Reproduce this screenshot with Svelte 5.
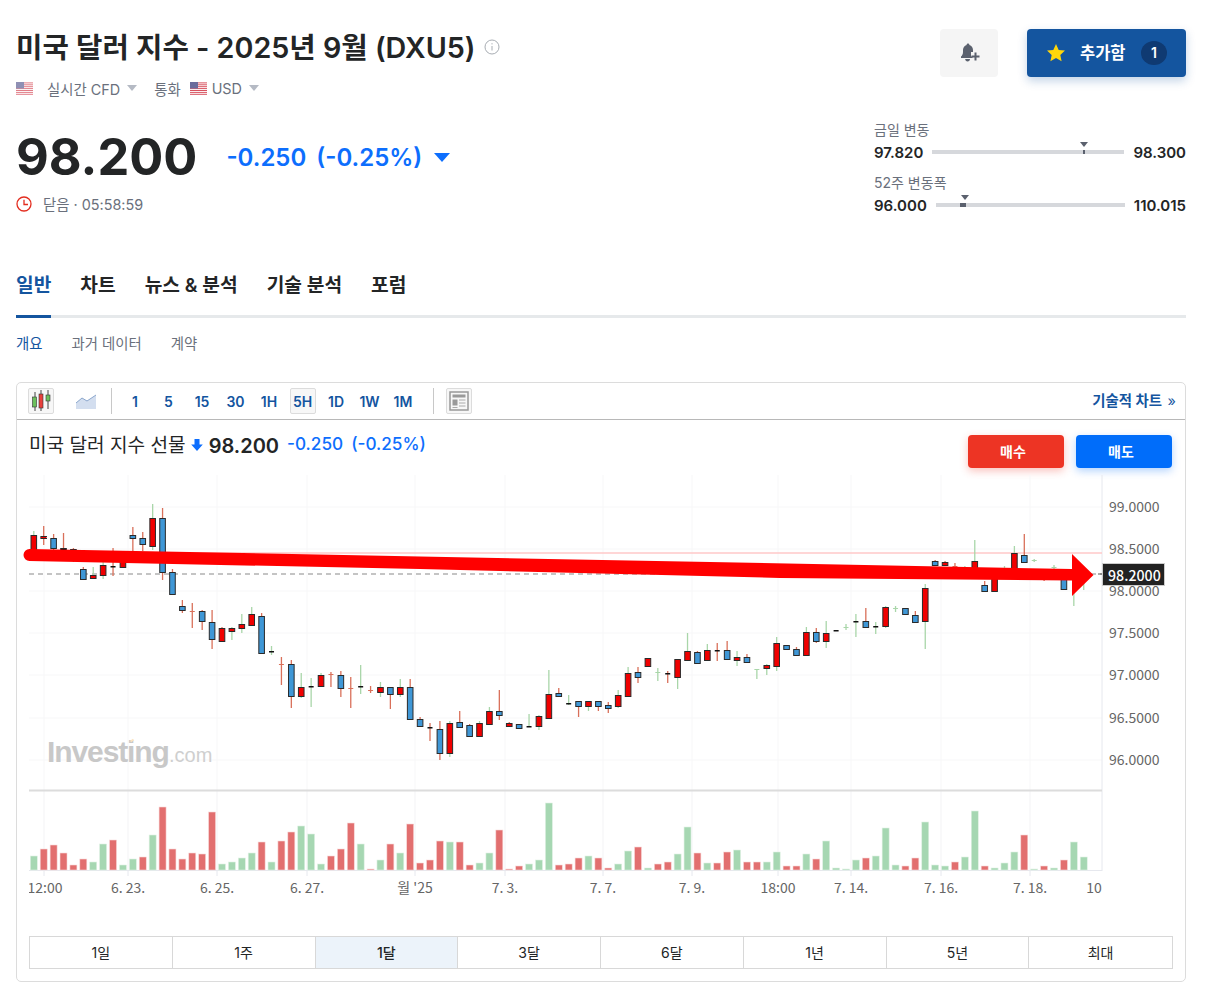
<script>
  // [wickTop, wickBottom, bodyTop, bodyBottom, body, wick]  r/b body, r/g wick
  const candles = [
    [531,552,535,560,"r","g"],[526,545,536,538,"r","r"],[534,550,538,548,"b","r"],[533,553,548,550,"k","r"],[548,562,549,551,"k","r"],
    [567,580,569,579,"b","r"],[567,579,575,578,"r","g"],[562,579,565,575,"r","g"],[548,576,566,567,"k","r"],[555,567,558,567,"r","r"],
    [527,552,535,538,"b","r"],[532,551,538,544,"b","r"],[504,550,518,546,"r","g"],[508,580,518,572,"b","r"],[569,595,572,594,"b","r"],
    [600,613,606,610,"b","r"],[603,628,611,612,"c","r"],[610,630,611,621,"b","r"],[610,649,622,639,"b","r"],[627,641,628,641,"r","r"],
    [627,640,628,631,"r","g"],[614,633,624,628,"r","g"],[607,625,614,625,"r","g"],[613,653,616,653,"b","r"],[646,655,651,652,"k","g"],
    [657,685,664,665,"c","r"],[660,708,664,696,"b","r"],[673,698,687,696,"r","g"],[678,707,686,687,"k","g"],[673,687,675,686,"r","g"],
    [672,687,674,675,"c","r"],[671,697,675,688,"b","r"],[677,708,688,689,"c","r"],[665,694,686,687,"k","g"],[686,693,690,691,"c","r"],
    [682,697,687,692,"r","g"],[687,709,687,694,"b","r"],[679,697,687,694,"r","g"],[679,720,687,719,"b","r"],[717,727,719,726,"b","r"],
    [723,741,727,728,"k","r"],[721,760,729,753,"b","r"],[721,757,723,753,"r","g"],[711,727,722,727,"b","r"],[724,736,725,736,"b","r"],
    [721,736,723,736,"r","g"],[707,724,711,724,"r","g"],[690,720,711,715,"b","r"],[722,727,723,726,"r","r"],[724,729,724,728,"b","r"],
    [714,727,726,727,"k","g"],[715,730,716,726,"r","g"],[670,718,694,718,"r","g"],[688,696,693,696,"b","r"],[695,705,703,704,"k","g"],
    [701,717,701,706,"b","r"],[701,711,701,706,"r","g"],[701,711,701,706,"b","r"],[702,713,705,708,"b","r"],[690,708,695,706,"r","g"],
    [667,696,673,696,"r","g"],[667,683,672,677,"b","r"],[658,666,658,666,"r","r"],[668,681,672,673,"e","g"],[671,683,673,674,"k","r"],
    [659,689,659,677,"r","g"],[633,660,651,660,"r","g"],[651,664,652,663,"b","r"],[644,660,650,660,"r","g"],[643,661,650,651,"k","r"],
    [641,659,650,659,"b","r"],[651,666,657,660,"r","g"],[654,663,657,662,"b","r"],[669,679,669,670,"e","g"],[664,675,665,668,"r","g"],
    [637,671,643,666,"r","g"],[645,649,645,649,"b","r"],[647,655,649,655,"b","r"],[627,655,632,655,"r","g"],[628,643,632,641,"b","r"],
    [621,648,633,641,"r","g"],[630,631,630,631,"k","g"],[624,630,627,628,"e","g"],[614,637,621,622,"k","g"],[608,628,621,627,"b","r"],
    [622,634,626,627,"k","g"],[606,628,607,626,"r","g"],[606,612,608,609,"e","g"],[608,614,608,614,"b","r"],[611,622,615,622,"b","r"],
    [584,649,588,621,"r","g"],[560,566,561,565,"b","r"],[561,566,562,565,"r","r"],[563,570,566,568,"c","r"],[566,570,567,568,"e","g"],
    [540,570,561,572,"r","g"],[581,591,585,591,"b","r"],[570,591,570,591,"r","r"],[566,576,570,571,"e","g"],[546,575,553,572,"r","g"],
    [534,563,555,562,"b","r"],[559,562,560,561,"e","g"],[575,581,576,577,"c","r"],[565,570,567,568,"e","g"],[575,590,576,589,"b","r"],
    [570,606,574,576,"e","g"],[570,590,572,578,"e","g"]
  ];
  const volumes = [
    "g14","r21","r25","r17","r5","r11","g8","g26","r30","g5","g11","r13","g35","r63","r21","r11","r17","r16","r58","g6",
    "g8","g12","g17","r28","g8","r29","r38","g44","g36","g6","r14","r21","r47","g26","r1","g10","r26","g17","r46","r7",
    "r10","r29","g28","r28","r5","g7","g17","r40","r1","r4","g6","g10","g67","r5","r6","r12","g14","r12","r2","g6",
    "g19","r23","g2","r6","r8","g16","g43","r17","g7","r7","r18","g20","r8","r8","g8","g18","r4","r4","g16","r11",
    "g29","g2","g1","g10","r12","g14","g42","g5","r4","r12","g48","g5","g4","r8","g13","g59","r4","g2","g7","g18",
    "r35","g1","r4","g2","r10","g28","g13"
  ];
  const step = 9.905;
  const xAt = (i) => 33.8 + i * step;

  const gridX = [44, 128, 217, 307, 415, 505, 603, 692, 778, 851, 941, 1030];
  const yLabels = [
    [507, "99.0000"], [549, "98.5000"], [591, "98.0000"], [633, "97.5000"],
    [675, "97.0000"], [718, "96.5000"], [760, "96.0000"]
  ];
  const xLabels = [
    [45, "12:00"], [128, "6. 23."], [217, "6. 25."], [307, "6. 27."], [415, "월 '25"], [505, "7. 3."],
    [603, "7. 7."], [692, "7. 9."], [778, "18:00"], [851, "7. 14."], [941, "7. 16."], [1030, "7. 18."], [1094, "10"]
  ];
  const intervals = ["1", "5", "15", "30", "1H", "5H", "1D", "1W", "1M"];
  const ranges = ["1일", "1주", "1달", "3달", "6달", "1년", "5년", "최대"];
  const bodyFill = { r: "#f00000", b: "#3f97d6", k: "#111", c: "#d9705a", e: "#a9d6a9" };
</script>

{#snippet flag()}
  <svg class="flag" viewBox="0 0 17 13" width="17" height="13">
    <rect width="17" height="13" fill="#fff" />
    <path d="M0 .9h17M0 2.8h17M0 4.700h17M0 6.600h17M0 8.500h17M0 10.400h17M0 12.300h17" stroke="#d8525f" stroke-width="1" />
    <rect width="8" height="6.500" fill="#6a6c9c" />
  </svg>
{/snippet}

<div class="page">
  <div class="top">
    <div class="title-wrap">
      <h1>미국 달러 지수 - 2025년 9월 (DXU5)</h1>
      <svg class="info" viewBox="0 0 16 16" width="16" height="16" fill="none" stroke="#a8adb3">
        <circle cx="8" cy="8" r="7" />
        <path d="M8 7v4.500M8 4.200v1.200" />
      </svg>
    </div>
    <div class="actions">
      <button class="bell" aria-label="알림">
        <svg viewBox="0 0 20 20" width="20" height="20" fill="#5b616e">
          <path d="M8 .5c.8 0 1.400.6 1.400 1.400 2.400.7 3.600 2.800 3.600 5V9H11v4.500h1.500V15H1v-1.500c1.300-1.200 2-2.600 2-4.600V7c0-2.300 1.300-4.400 3.600-5.100C6.600 1.100 7.200.5 8 .5z" />
          <path d="M5.200 16h4.800c0 1.500-1 2.500-2.400 2.500S5.200 17.500 5.200 16z" />
          <path d="M15.500 9.500v8M11.500 13.500h8" stroke="#5b616e" stroke-width="2" fill="none" />
        </svg>
      </button>
      <button class="watch">
        <svg viewBox="0 0 20 20" width="20" height="20"><path d="M10 1l2.700 5.900 6.300.7-4.700 4.300 1.300 6.300L10 15l-5.600 3.200 1.300-6.300L1 7.600l6.300-.7z" fill="#ffd60a" /></svg>
        <span>추가함</span>
        <b>1</b>
      </button>
    </div>
  </div>

  <div class="meta">
    <span class="flag-first">{@render flag()}</span>
    <span>실시간 CFD</span><i class="caret"></i>
    <span class="cur">통화</span>
    {@render flag()}
    <span class="usd">USD</span><i class="caret"></i>
  </div>

  <div class="quote">
    <div>
      <div class="price-row">
        <span class="price">98.200</span>
        <span class="change">-0.250</span>
        <span class="change pct">(-0.25%)</span>
        <i class="down"></i>
      </div>
      <div class="closed">
        <svg viewBox="0 0 16 16" width="16" height="16" fill="none" stroke="#e32d1f" stroke-width="1.300">
          <circle cx="8" cy="8" r="7" />
          <path d="M8 3.800V8.500H12" />
        </svg>
        <span>닫음 · 05:58:59</span>
      </div>
    </div>
    <div class="ranges">
      <div class="range-label">금일 변동</div>
      <div class="range-row">
        <b>97.820</b>
        <div class="track"><i class="mark" style="left:78.500%"></i><i class="dot" style="left:78.500%;width:2px"></i></div>
        <b>98.300</b>
      </div>
      <div class="range-label second">52주 변동폭</div>
      <div class="range-row">
        <b>96.000</b>
        <div class="track"><i class="mark" style="left:15%"></i><i class="dot" style="left:13%;width:6px"></i></div>
        <b>110.015</b>
      </div>
    </div>
  </div>

  <nav class="tabs">
    <a class="active" href="#top">일반</a>
    <a href="#top">차트</a>
    <a href="#top">뉴스 &amp; 분석</a>
    <a href="#top">기술 분석</a>
    <a href="#top">포럼</a>
  </nav>
  <nav class="subtabs">
    <a class="active" href="#top">개요</a>
    <a href="#top">과거 데이터</a>
    <a href="#top">계약</a>
  </nav>

  <section class="card">
    <div class="toolbar">
      <button class="tool on" aria-label="캔들">
        <svg viewBox="0 0 24 24" width="24" height="24">
          <path d="M6 3v19M12 1v21M19 1v19" stroke="#444" stroke-width="1" />
          <rect x="3.500" y="8" width="4" height="10" fill="#6cc05c" stroke="#333" stroke-width=".6" />
          <rect x="10" y="5" width="4" height="14" fill="#e8403c" stroke="#333" stroke-width=".6" />
          <rect x="17" y="6" width="4" height="6" fill="#6cc05c" stroke="#333" stroke-width=".6" />
        </svg>
      </button>
      <button class="tool plain" aria-label="영역">
        <svg viewBox="0 0 22 16" width="22" height="16">
          <path d="M1 10l6-5 5 3 9-6v14H1z" fill="#d3deef" />
          <path d="M1 10l6-5 5 3 9-6" fill="none" stroke="#8aa6cc" />
        </svg>
      </button>
      <span class="sep"></span>
      <div class="intervals">
        {#each intervals as t}
          <button class="iv" class:sel={t === "5H"}>{t}</button>
        {/each}
      </div>
      <span class="sep second"></span>
      <button class="tool on" aria-label="레이아웃">
        <svg viewBox="0 0 22 22" width="22" height="22" fill="#9a9a9a">
          <path d="M2 2h18v18H2z" fill="none" stroke="#999" stroke-width="1.500" />
          <rect x="4.500" y="4.500" width="13" height="3" />
          <rect x="4.500" y="9.500" width="5" height="6" />
          <path d="M11 10h6.500M11 13h6.500M11 16h6.500M4.500 17.500h5" stroke="#aaa" />
        </svg>
      </button>
      <a class="tech" href="#top">기술적 차트 <span>»</span></a>
    </div>

    <div class="chart">
      <div class="chart-head">
        <span class="name">미국 달러 지수 선물</span>
        <svg viewBox="0 0 12 14" width="12" height="14"><path d="M3.500 1h5v5.500H11.800L6 13 .2 6.500h3.300z" fill="#0d6efd" /></svg>
        <span class="p">98.200</span>
        <span class="c">-0.250</span>
        <span class="c">(-0.25%)</span>
        <div class="trade">
          <button class="buy">매수</button>
          <button class="sell">매도</button>
        </div>
      </div>

      <svg class="plot" width="1168" height="505" viewBox="18 475 1168 505">
        <defs>
          <clipPath id="pane"><rect x="29" y="475" width="1073" height="430" /></clipPath>
        </defs>
        {#each gridX as x}
          <line x1={x} x2={x} y1="475" y2="790" stroke="#f7f7f8" />
          <line x1={x} x2={x} y1="791" y2="870" stroke="#f3f3f5" />
          <line x1={x} x2={x} y1="870" y2="876" stroke="#e6e8ee" />
        {/each}
        {#each yLabels as [y, l]}
          <line x1="29" x2="1102" y1={y} y2={y} stroke="#f7f7f8" />
          <text class="axis" x="1109" y={y + 5}>{l}</text>
        {/each}
        <line x1="1102" x2="1102" y1="475" y2="871" stroke="#e6e8ee" />
        <line x1="29" x2="1102" y1="790.500" y2="790.500" stroke="#dcdcdc" stroke-width="2" />
        <line x1="29" x2="1102" y1="870.500" y2="870.500" stroke="#e6e8ee" />

        <text class="logo" x="47" y="762">Investing</text>
        <text class="logo-com" x="169" y="762">.com</text>
        <line x1="130.500" x2="133.500" y1="741.500" y2="739.500" stroke="#fbe3c0" stroke-width="2" />

        <line x1="29" x2="1102" y1="553" y2="553" stroke="#ffc9c9" stroke-width="1.500" />
        <line x1="29" x2="1102" y1="574" y2="574" stroke="#8a8a8a" stroke-width="1.200" stroke-dasharray="5 4" />

        <g class="soft">
          {#each candles as [t, b, bt, bb, k, w], i}
            <line x1={xAt(i)} x2={xAt(i)} y1={t} y2={b} stroke={w === "r" ? "#d9705a" : "#a9d6a9"} stroke-width="1.300" />
            {#if k === "c" || k === "e"}
              <rect x={xAt(i) - 2.500} y={bt} width="5" height="1" fill={bodyFill[k]} />
            {:else if bb - bt < 2}
              <rect x={xAt(i) - 2.500} y={bt} width="5" height="1.500" fill="#111" />
            {:else}
              <rect x={xAt(i) - 2.800} y={bt + 0.500} width="5.600" height={bb - bt} fill={bodyFill[k]} stroke="#2a2a2a" stroke-width="1" />
            {/if}
          {/each}

          {#each volumes as v, i}
            {@const h = +v.slice(1)}
            <rect
              x={xAt(i) - 3.500}
              y={870 - h}
              width="7"
              height={h}
              fill={v[0] === "r" ? "#e26f6f" : "#a6d7b2"}
              stroke={v[0] === "r" ? "#f8d9d9" : "#e0f1e4"}
              stroke-width=".6"
            />
          {/each}
        </g>

        <g clip-path="url(#pane)">
          {#each xLabels as [x, l]}
            <text class="axis" {x} y="893" text-anchor="middle">{l}</text>
          {/each}
        </g>

        <path
          d="M29.500 549 L1072 569 V554 L1093.500 575 L1072 596 V580.500 L780 578 L420 569 L29.500 561 A6 6 0 0 1 29.500 549 Z"
          fill="#f00"
        />

        <line x1="1098" x2="1102" y1="574" y2="574" stroke="#555" />
        <rect x="1102.500" y="563.500" width="62" height="22" fill="#222" stroke="#ccc" stroke-width="1" />
        <text class="last" x="1108" y="580.500">98.2000</text>
      </svg>

      <div class="range-tabs">
        {#each ranges as r}
          <button class:cur={r === "1달"}>{r}</button>
        {/each}
      </div>
    </div>
  </section>
</div>

<style>
  :global(body) {
    margin: 0;
    background: #fff;
  }
  .page {
    box-sizing: border-box;
    width: 1205px;
    height: 1004px;
    padding: 29px 19px 0 16px;
    color: #232526;
    font-family: Inter, "Noto Sans CJK KR", sans-serif;
    overflow: hidden;
  }
  button {
    font-family: inherit;
    cursor: pointer;
  }
  a {
    text-decoration: none;
    color: inherit;
  }
  .top {
    display: flex;
    justify-content: space-between;
    height: 48px;
  }
  .title-wrap {
    display: flex;
    align-items: center;
    gap: 8px;
    height: 37px;
  }
  h1 {
    margin: 0;
    font-size: 28.700px;
    line-height: 37px;
    font-weight: 600;
  }
  .info {
    margin-top: -1px;
  }
  .actions {
    display: flex;
    gap: 29px;
  }
  .bell {
    width: 58px;
    height: 48px;
    background: #f5f5f5;
    border: 0;
    border-radius: 4px;
    display: flex;
    align-items: center;
    justify-content: center;
    padding: 0 0 0 1px;
  }
  .watch {
    width: 159px;
    height: 48px;
    background: #14559f;
    color: #fff;
    border: 0;
    border-radius: 4px;
    box-shadow: 0 4px 10px rgba(20, 85, 159, 0.25);
    display: flex;
    align-items: center;
    padding: 0 19px 0 19px;
    font-size: 16.500px;
    font-weight: 600;
  }
  .watch span {
    margin-left: 14px;
    flex: 1;
    text-align: left;
    margin-top: -2px;
  }
  .watch b {
    width: 26px;
    height: 24px;
    border-radius: 50%;
    background: #0f3a72;
    font-size: 14px;
    line-height: 24px;
    font-weight: 600;
  }
  .meta {
    display: flex;
    align-items: center;
    height: 24px;
    margin-top: -1px;
    font-size: 14.400px;
    color: #6a707c;
  }
  .flag {
    display: block;
    flex: none;
  }
  .flag-first {
    margin-right: 14px;
    opacity: 0.75;
  }
  .caret {
    width: 0;
    height: 0;
    border: 5px solid transparent;
    border-top: 6px solid #b5bac4;
    border-bottom: 0;
    margin-left: 7px;
  }
  .cur {
    margin: 0 9px 0 17px;
  }
  .usd {
    margin-left: 5px;
  }
  .quote {
    display: flex;
    justify-content: space-between;
    margin-top: 22px;
    height: 134px;
  }
  .price-row {
    display: flex;
    align-items: center;
    height: 62px;
    margin-top: 4px;
  }
  .price {
    font-size: 50.500px;
    font-weight: 700;
    line-height: 62px;
    margin-right: 29px;
  }
  .change {
    font-size: 24px;
    font-weight: 600;
    color: #0d6efd;
    margin-right: 10px;
  }
  .pct {
    margin-right: 12px;
  }
  .down {
    width: 0;
    height: 0;
    border: 8px solid transparent;
    border-top: 9px solid #0d6efd;
    border-bottom: 0;
  }
  .closed {
    display: flex;
    align-items: center;
    gap: 11px;
    margin-top: 5px;
    font-size: 14.400px;
    color: #6a707c;
  }
  .ranges {
    width: 312px;
    margin-top: -2px;
  }
  .range-label {
    font-size: 14px;
    line-height: 20px;
    color: #6a707c;
  }
  .range-label.second {
    margin-top: 9px;
  }
  .range-row {
    display: flex;
    align-items: center;
    justify-content: space-between;
    height: 24px;
    font-size: 15px;
    gap: 9px;
  }
  .range-row b {
    font-weight: 600;
  }
  .track {
    flex: 1;
    height: 4px;
    background: #d6d8dc;
    position: relative;
  }
  .mark {
    position: absolute;
    top: -8px;
    width: 0;
    height: 0;
    border: 4px solid transparent;
    border-top: 5px solid #5b616e;
    border-bottom: 0;
    margin-left: -3px;
  }
  .dot {
    position: absolute;
    top: 0;
    height: 4px;
    background: #5b616e;
  }
  .tabs {
    display: flex;
    gap: 29px;
    height: 62px;
    border-bottom: 3px solid #e6e9eb;
    box-sizing: border-box;
    font-size: 19.200px;
    font-weight: 600;
  }
  .tabs a {
    display: block;
    height: 62px;
    line-height: 58px;
    box-sizing: border-box;
  }
  .tabs a.active {
    color: #14559f;
    border-bottom: 3px solid #14559f;
  }
  .subtabs {
    display: flex;
    gap: 29px;
    height: 48px;
    align-items: center;
    font-size: 14.400px;
    color: #6a707c;
  }
  .subtabs .active {
    color: #14559f;
  }
  .card {
    margin-top: 16px;
    height: 600px;
    box-sizing: border-box;
    border: 1px solid #dcdcdc;
    border-radius: 5px;
  }
  .toolbar {
    display: flex;
    align-items: center;
    height: 37px;
    box-sizing: border-box;
    padding: 0 9px 0 11px;
    border-bottom: 1px solid #b8b8b8;
  }
  .tool {
    width: 26px;
    height: 26px;
    padding: 0;
    border: 1px solid transparent;
    background: none;
    display: flex;
    align-items: center;
    justify-content: center;
  }
  .tool.on {
    border-color: #dcdcdc;
    background: #f7f7f7;
    border-radius: 2px;
  }
  .tool.plain {
    margin-left: 19px;
  }
  .sep {
    width: 1px;
    height: 26px;
    background: #c8c8c8;
    margin: 0 10px 0 12px;
  }
  .sep.second {
    margin: 0 12px 0 17px;
  }
  .intervals {
    display: flex;
    gap: 7.500px;
  }
  .iv {
    width: 26px;
    height: 26px;
    padding: 0;
    border: 1px solid transparent;
    background: none;
    color: #14559f;
    font-size: 14px;
    font-weight: 600;
  }
  .iv.sel {
    background: #f7f7f7;
    border-color: #dcdcdc;
    border-radius: 2px;
  }
  .tech {
    margin-left: auto;
    margin-top: -3px;
    font-size: 14.400px;
    font-weight: 600;
    color: #14559f;
  }
  .tech span {
    font-weight: 400;
    margin-left: 2px;
  }
  .chart {
    position: relative;
    height: 560px;
  }
  .chart-head {
    display: flex;
    align-items: center;
    height: 55px;
    padding: 0 13px 0 12px;
    gap: 5px;
    box-sizing: border-box;
  }
  .chart-head .name {
    font-size: 19.100px;
    font-weight: 400;
    align-self: flex-start;
    margin-top: 10px;
  }
  .chart-head svg {
    align-self: flex-start;
    margin-top: 18px;
  }
  .chart-head .p {
    font-size: 20px;
    font-weight: 600;
    align-self: flex-start;
    margin-top: 14px;
    margin-right: 3px;
    margin-left: 1px;
  }
  .chart-head .c {
    font-size: 17.200px;
    font-weight: 500;
    color: #0d6efd;
    align-self: flex-start;
    margin-top: 13px;
    margin-right: 3px;
  }
  .trade {
    margin-left: auto;
    display: flex;
    gap: 12px;
    margin-top: 7px;
  }
  .trade button {
    width: 96px;
    height: 33px;
    border: 0;
    border-radius: 4px;
    color: #fff;
    font-size: 14px;
    font-weight: 700;
    padding: 0 6px 0 0;
  }
  .buy {
    background: #ed3424;
    box-shadow: 0 3px 8px rgba(237, 52, 36, 0.3);
  }
  .sell {
    background: #006dfa;
    box-shadow: 0 3px 8px rgba(0, 109, 250, 0.3);
  }
  .plot {
    position: absolute;
    left: 1px;
    top: 55px;
    display: block;
  }
  .soft {
    filter: blur(0.3px);
  }
  text {
    font-family: "Noto Sans CJK KR", sans-serif;
  }
  .axis {
    font-size: 14px;
    fill: #666;
  }
  .last {
    font-size: 14.200px;
    font-weight: 500;
    fill: #fff;
  }
  .logo {
    font-family: "Liberation Sans", sans-serif;
    font-size: 30px;
    font-weight: 700;
    letter-spacing: -1.100px;
    fill: #c8c8c8;
  }
  .logo-com {
    font-family: "Liberation Sans", sans-serif;
    font-size: 20px;
    fill: #cfcfcf;
  }
  .range-tabs {
    position: absolute;
    left: 12px;
    right: 12px;
    top: 516px;
    height: 33px;
    display: grid;
    grid-template-columns: repeat(8, 1fr);
    border: 1px solid #d8d8d8;
    box-sizing: border-box;
  }
  .range-tabs button {
    border: 0;
    border-right: 1px solid #d8d8d8;
    background: #fff;
    font-size: 14px;
    color: #232526;
    padding: 0 0 2px;
  }
  .range-tabs button:last-child {
    border-right: 0;
  }
  .range-tabs .cur {
    margin: 0;
    background: #ecf3fa;
    font-weight: 500;
  }
</style>
